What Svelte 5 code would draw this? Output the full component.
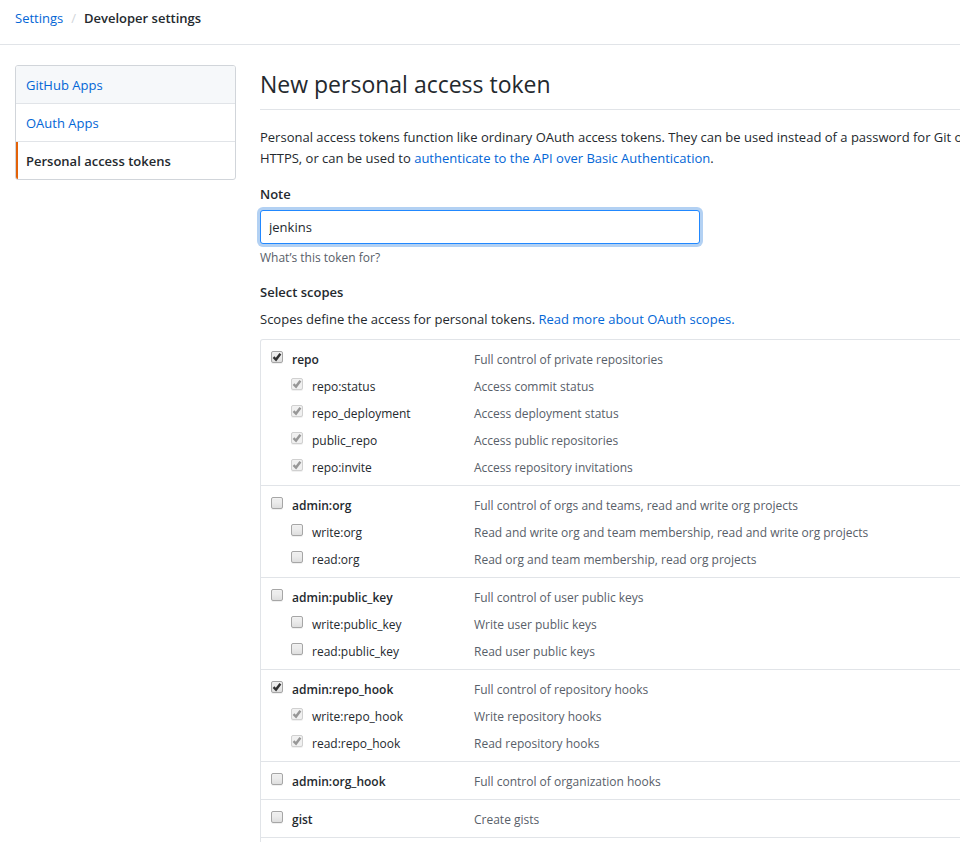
<script>
  const groups = $state([
    {
      name: 'repo', text: 'Full control of private repositories', checked: true,
      children: [
        { name: 'repo:status', text: 'Access commit status' },
        { name: 'repo_deployment', text: 'Access deployment status' },
        { name: 'public_repo', text: 'Access public repositories' },
        { name: 'repo:invite', text: 'Access repository invitations' }
      ]
    },
    {
      name: 'admin:org', text: 'Full control of orgs and teams, read and write org projects', checked: false,
      children: [
        { name: 'write:org', text: 'Read and write org and team membership, read and write org projects' },
        { name: 'read:org', text: 'Read org and team membership, read org projects' }
      ]
    },
    {
      name: 'admin:public_key', text: 'Full control of user public keys', checked: false,
      children: [
        { name: 'write:public_key', text: 'Write user public keys' },
        { name: 'read:public_key', text: 'Read user public keys' }
      ]
    },
    {
      name: 'admin:repo_hook', text: 'Full control of repository hooks', checked: true,
      children: [
        { name: 'write:repo_hook', text: 'Write repository hooks' },
        { name: 'read:repo_hook', text: 'Read repository hooks' }
      ]
    },
    { name: 'admin:org_hook', text: 'Full control of organization hooks', checked: false, children: [] },
    { name: 'gist', text: 'Create gists', checked: false, children: [] }
  ]);
  let note = $state('jenkins');
</script>

{#snippet tick()}
  <svg class="tick" viewBox="0 0 12 12" aria-hidden="true">
    <path d="M2.5 6.2 5 8.6 9.4 2.8" />
  </svg>
{/snippet}

<div class="page">
  <nav class="crumbs" aria-label="Breadcrumb">
    <a href="#settings">Settings</a>
    <span class="slash">/</span>
    <strong>Developer settings</strong>
  </nav>

  <div class="columns">
    <nav class="menu" aria-label="Developer settings">
      <a class="hovered" href="#apps">GitHub Apps</a>
      <a href="#oauth">OAuth Apps</a>
      <a class="current" href="#tokens" aria-current="page">Personal access tokens</a>
    </nav>

    <main>
      <h1>New personal access token</h1>
      <p class="intro">
        Personal access tokens function like ordinary OAuth access tokens. They can be used instead of a password for Git over
        HTTPS, or can be used to <a href="#api">authenticate to the API over Basic Authentication</a>.
      </p>

      <label class="heading" for="note">Note</label>
      <input id="note" class="note" type="text" bind:value={note} />
      <p class="hint">What’s this token for?</p>

      <h2 class="heading">Select scopes</h2>
      <p class="about">
        Scopes define the access for personal tokens. <a href="#scopes">Read more about OAuth scopes.</a>
      </p>

      <ul class="scopes">
        {#each groups as group}
          <li>
            <div class="row">
              <label class="top">
                <span class="box"><input type="checkbox" bind:checked={group.checked} />{@render tick()}</span>
                {group.name}
              </label>
              <span class="text">{group.text}</span>
            </div>
            {#each group.children as child}
              <div class="row">
                <label class="child">
                  <span class="box"><input type="checkbox" checked={group.checked} disabled={group.checked} />{@render tick()}</span>
                  {child.name}
                </label>
                <span class="text">{child.text}</span>
              </div>
            {/each}
          </li>
        {/each}
      </ul>
    </main>
  </div>
</div>

<style>
  :global(body) {
    background: #fff;
  }
  .page {
    overflow-x: clip;
    font: 13px/21px 'Segoe UI', 'Open Sans', 'Noto Sans', sans-serif;
    color: #24292e;
  }
  a {
    color: #0366d6;
    text-decoration: none;
  }
  strong {
    font-weight: 600;
  }
  .crumbs {
    display: flex;
    gap: 8px;
    padding: 8px 15px 15px;
    border-bottom: 1px solid #e1e4e8;
  }
  .slash {
    color: #d1d5da;
  }
  .columns {
    display: flex;
    align-items: flex-start;
    gap: 24px;
    min-width: 1010px;
    box-sizing: border-box;
    padding: 20px 15px 0;
  }
  .menu {
    display: flex;
    flex: 0 0 219px;
    flex-direction: column;
    border: 1px solid #d1d5da;
    border-radius: 3px;
    overflow: hidden;
  }
  .menu a {
    padding: 9px 10px 7px;
    border-bottom: 1px solid #e1e4e8;
  }
  .menu a:last-child {
    border-bottom: 0;
  }
  .menu .hovered {
    background: #f6f8fa;
  }
  .menu .current {
    padding-left: 8px;
    border-left: 2px solid #e36209;
    color: #24292e;
    font-weight: 600;
  }
  main {
    flex: 1;
    min-width: 0;
  }
  h1 {
    margin: 0 0 17px;
    padding-bottom: 5px;
    border-bottom: 1px solid #e1e4e8;
    font-size: 23px;
    font-weight: 400;
    line-height: 39px;
  }
  p {
    margin: 0;
  }
  .intro {
    max-width: 735px;
    margin-bottom: 15px;
  }
  .heading {
    display: block;
    margin: 0;
    font-size: 13px;
    font-weight: 600;
    line-height: 21px;
  }
  .note {
    display: block;
    width: 440px;
    height: 34px;
    box-sizing: border-box;
    margin: 5px 0 3px;
    padding: 0 8px;
    border: 1px solid #2188ff;
    border-radius: 3px;
    outline: none;
    box-shadow: 0 0 0 3px rgba(3, 102, 214, 0.3);
    background: #fff;
    color: #24292e;
    font: inherit;
  }
  .hint {
    margin-bottom: 14px;
    color: #586069;
    font-size: 12px;
  }
  .about {
    margin: 6px 0 9px;
  }
  .scopes {
    margin: 0;
    padding: 0 0 4px;
    border: solid #e1e4e8;
    border-width: 1px 1px 0;
    border-radius: 3px 3px 0 0;
    font-size: 12px;
    list-style: none;
  }
  .scopes li {
    display: flex;
    flex-direction: column;
    gap: 6px;
    padding: 9px 10px 7px;
    border-bottom: 1px solid #e1e4e8;
  }
  .row {
    display: flex;
  }
  .row label {
    display: flex;
    flex: 0 0 203px;
    box-sizing: border-box;
    gap: 9px;
  }
  .row .top {
    font-weight: 600;
  }
  .row .child {
    padding-left: 20px;
  }
  .text {
    color: #586069;
  }
  .box {
    display: grid;
    width: 12px;
    height: 12px;
    margin-top: 2px;
  }
  .box input,
  .tick {
    grid-area: 1 / 1;
    width: 12px;
    height: 12px;
    box-sizing: border-box;
  }
  .box input {
    appearance: none;
    margin: 0;
    border: 1px solid #a6a6a6;
    border-radius: 2px;
    background: linear-gradient(#ededed 38%, #dedede);
    box-shadow: inset 0 1px #f2f2f2, 0 1px #f0f0f0;
  }
  .box input:disabled {
    border-color: #d0d0d0;
    background: #f0f0f0;
  }
  .tick {
    display: none;
    fill: none;
    stroke: #333;
    stroke-width: 2.4;
    pointer-events: none;
  }
  .box input:checked + .tick {
    display: block;
  }
  .box input:disabled + .tick {
    stroke: #979797;
  }
</style>
